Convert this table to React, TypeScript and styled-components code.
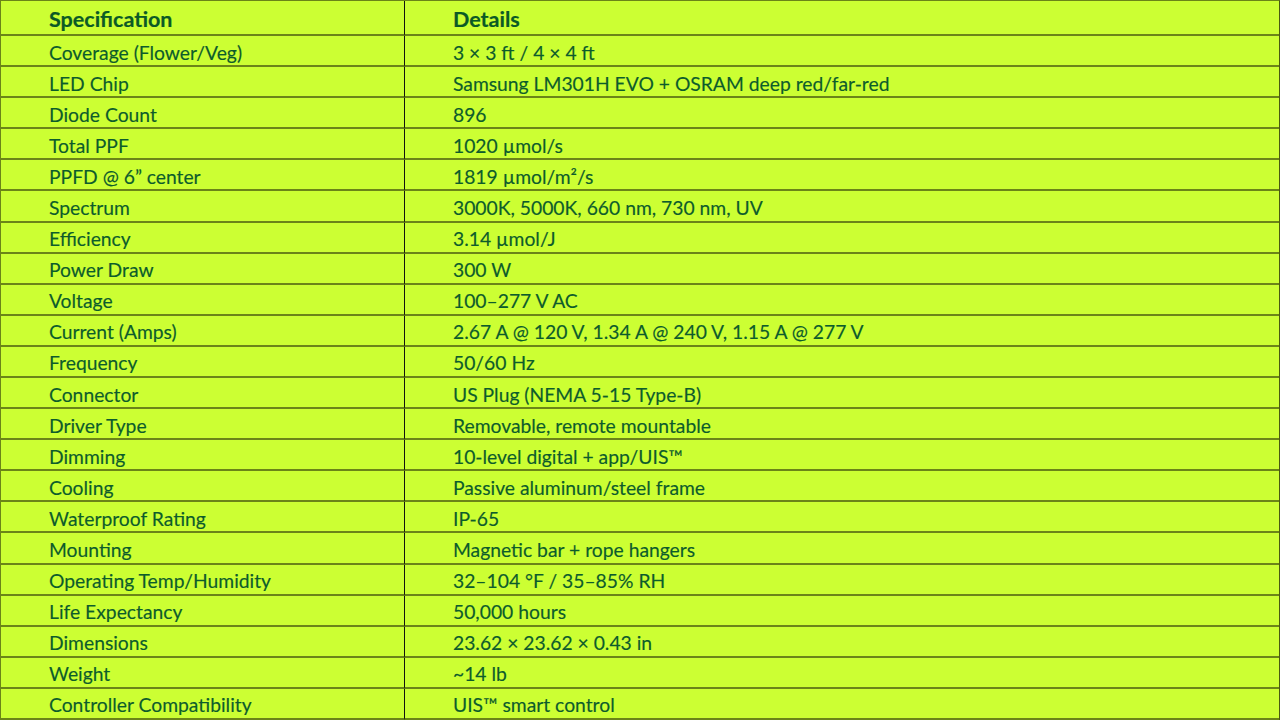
import React from "react";
import styled, { createGlobalStyle } from "styled-components";

const Global = createGlobalStyle`
  html, body { margin: 0; padding: 0; background: #ccff33; }
  body { font-family: Lato, "Open Sans", sans-serif; }
`;

const rows: [string, string][] = [
  ["Coverage (Flower/Veg)", "3 × 3 ft / 4 × 4 ft"],
  ["LED Chip", "Samsung LM301H EVO + OSRAM deep red/far-red"],
  ["Diode Count", "896"],
  ["Total PPF", "1020 µmol/s"],
  ["PPFD @ 6\u201D center", "1819 µmol/m²/s"],
  ["Spectrum", "3000K, 5000K, 660 nm, 730 nm, UV"],
  ["Efficiency", "3.14 µmol/J"],
  ["Power Draw", "300 W"],
  ["Voltage", "100–277 V AC"],
  ["Current (Amps)", "2.67 A @ 120 V, 1.34 A @ 240 V, 1.15 A @ 277 V"],
  ["Frequency", "50/60 Hz"],
  ["Connector", "US Plug (NEMA 5-15 Type-B)"],
  ["Driver Type", "Removable, remote mountable"],
  ["Dimming", "10-level digital + app/UIS™"],
  ["Cooling", "Passive aluminum/steel frame"],
  ["Waterproof Rating", "IP-65"],
  ["Mounting", "Magnetic bar + rope hangers"],
  ["Operating Temp/Humidity", "32–104 °F / 35–85% RH"],
  ["Life Expectancy", "50,000 hours"],
  ["Dimensions", "23.62 × 23.62 × 0.43 in"],
  ["Weight", "~14 lb"],
  ["Controller Compatibility", "UIS™ smart control"],
];

const Table = styled.div`
  box-sizing: border-box;
  width: 1280px;
  height: 720px;
  display: grid;
  grid-template-columns: 404px 1fr;
  grid-template-rows: 35px repeat(22, 1fr);
  border-top: 1px solid #6b8418;
  border-left: 1px solid #6b8418;
  border-right: 1px solid #4a5a10;
  overflow: hidden;
  background: #ccff33;
`;

const Cell = styled.div<{ $head?: boolean; $first?: boolean }>`
  box-sizing: border-box;
  display: flex;
  align-items: center;
  padding-left: 48px;
  padding-top: 3px;
  border-bottom: 2px solid #6b8418;
  border-right: ${(p) => (p.$first ? "1px solid #111" : "none")};
  color: ${(p) => (p.$head ? "#0b5a26" : "#0d5c2c")};
  font-size: ${(p) => (p.$head ? "21.5px" : "19.3px")};
  font-weight: ${(p) => (p.$head ? 700 : 400)};
  -webkit-text-stroke: ${(p) => (p.$head ? "0.2px" : "0.15px")} currentColor;
  white-space: nowrap;
`;

export default function App() {
  return (
    <>
      <Global />
      <Table>
        <Cell $head $first>Specification</Cell>
        <Cell $head>Details</Cell>
        {rows.map(([a, b]) => (
          <React.Fragment key={a}>
            <Cell $first>{a}</Cell>
            <Cell>{b}</Cell>
          </React.Fragment>
        ))}
      </Table>
    </>
  );
}
